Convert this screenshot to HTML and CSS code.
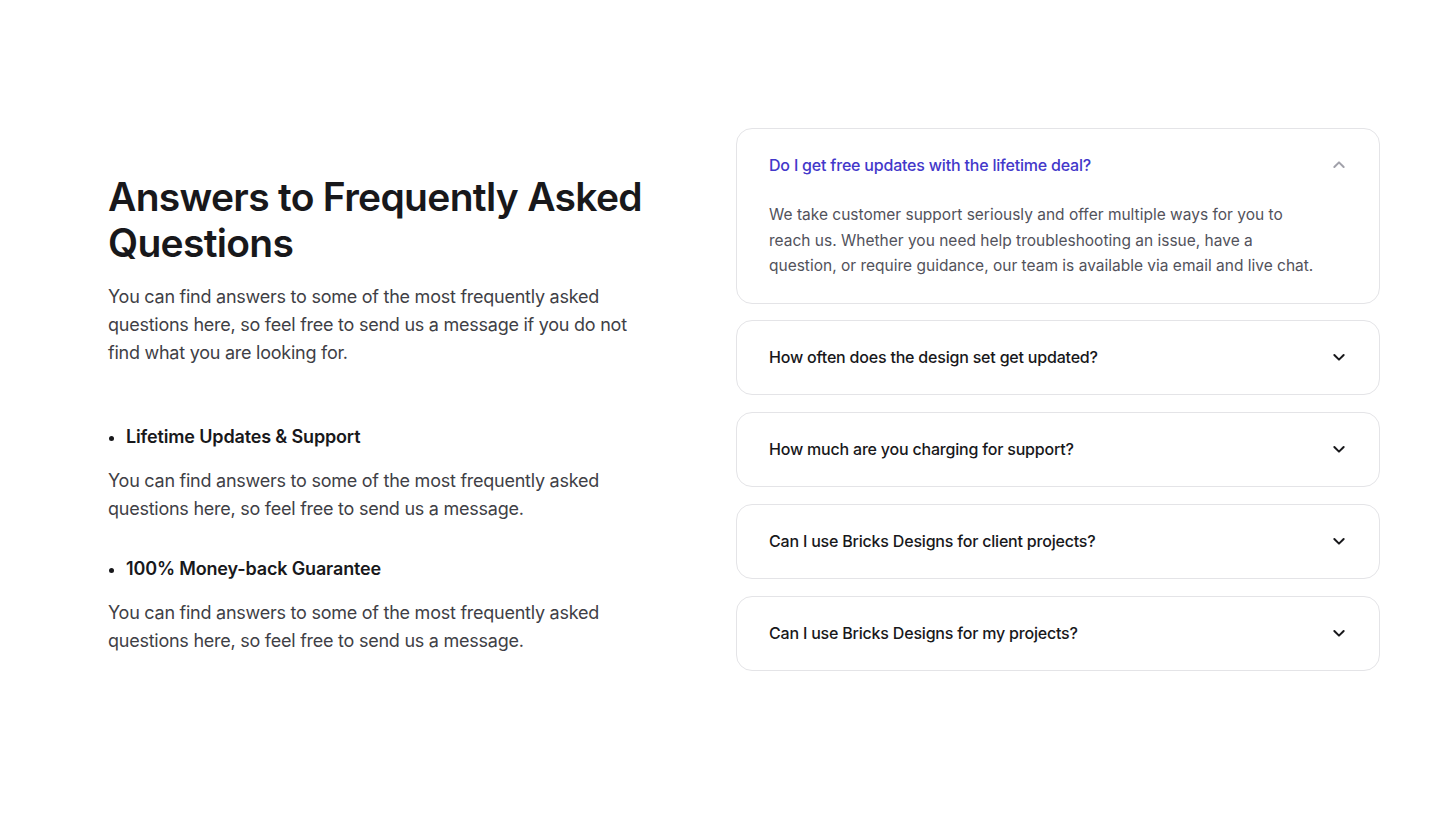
FILE: index.html
```html
<!DOCTYPE html>
<html lang="en">
<head>
  <meta charset="UTF-8">
  <meta name="viewport" content="width=device-width, initial-scale=1.0">
  <title>FAQ</title>
  <link rel="stylesheet" href="styles.css">
</head>
<body>

  <section class="faq">
    <div class="faq-intro">
      <h2>Answers to Frequently Asked Questions</h2>
      <p class="lead">You can find answers to some of the most frequently asked questions here, so feel free to send us a message if you do not find what you are looking for.</p>

      <ul class="perks">
        <li>
          <h4>Lifetime Updates &amp; Support</h4>
          <p>You can find answers to some of the most frequently asked questions here, so feel free to send us a message.</p>
        </li>
        <li>
          <h4>100% Money-back Guarantee</h4>
          <p>You can find answers to some of the most frequently asked questions here, so feel free to send us a message.</p>
        </li>
      </ul>
    </div>

    <div class="accordion">
      <div class="item open">
        <button class="question">
          <span>Do I get free updates with the lifetime deal?</span>
          <svg width="16" height="16" viewBox="0 0 24 24" fill="none" stroke="currentColor" stroke-width="3" stroke-linecap="round" stroke-linejoin="round"><path d="M5 15l7-7 7 7"/></svg>
        </button>
        <p class="answer">We take customer support seriously and offer multiple ways for you to reach us. Whether you need help troubleshooting an issue, have a question, or require guidance, our team is available via email and live chat.</p>
      </div>
      <div class="item">
        <button class="question">
          <span>How often does the design set get updated?</span>
          <svg width="16" height="16" viewBox="0 0 24 24" fill="none" stroke="currentColor" stroke-width="3" stroke-linecap="round" stroke-linejoin="round"><path d="M5 9l7 7 7-7"/></svg>
        </button>
      </div>
      <div class="item">
        <button class="question">
          <span>How much are you charging for support?</span>
          <svg width="16" height="16" viewBox="0 0 24 24" fill="none" stroke="currentColor" stroke-width="3" stroke-linecap="round" stroke-linejoin="round"><path d="M5 9l7 7 7-7"/></svg>
        </button>
      </div>
      <div class="item">
        <button class="question">
          <span>Can I use Bricks Designs for client projects?</span>
          <svg width="16" height="16" viewBox="0 0 24 24" fill="none" stroke="currentColor" stroke-width="3" stroke-linecap="round" stroke-linejoin="round"><path d="M5 9l7 7 7-7"/></svg>
        </button>
      </div>
      <div class="item">
        <button class="question">
          <span>Can I use Bricks Designs for my projects?</span>
          <svg width="16" height="16" viewBox="0 0 24 24" fill="none" stroke="currentColor" stroke-width="3" stroke-linecap="round" stroke-linejoin="round"><path d="M5 9l7 7 7-7"/></svg>
        </button>
      </div>
    </div>
  </section>

</body>
</html>
```

FILE: styles.css
```css
body {
  margin: 0;
  background-color: #ffffff;
  font-family: Inter, "Liberation Sans", sans-serif;
  color: #18181b;
}

.faq {
  display: flex;
  align-items: flex-start;
  gap: 86px;
  padding: 128px 60px 160px 108px;
}

.faq-intro {
  width: 542px;
  flex-shrink: 0;
  margin-top: 46px;
}

.faq-intro h2 {
  margin: 0 0 17px 0;
  font-size: 39px;
  line-height: 46px;
  font-weight: 600;
  letter-spacing: -0.7px;
  color: #18181b;
}

.lead {
  margin: 0;
  font-size: 18px;
  line-height: 28px;
  letter-spacing: -0.25px;
  color: #3f3f46;
}

.perks {
  margin: 56px 0 0 0;
  padding: 0 0 0 18px;
}

.perks li {
  margin-bottom: 32px;
}

.perks li:last-child {
  margin-bottom: 0;
}

.perks h4 {
  margin: 0 0 16px 0;
  font-size: 18px;
  line-height: 28px;
  font-weight: 600;
  letter-spacing: -0.15px;
}

.perks p {
  margin: 0 0 0 -18px;
  font-size: 18px;
  line-height: 28px;
  letter-spacing: -0.25px;
  color: #3f3f46;
}

.accordion {
  flex: 1;
  display: flex;
  flex-direction: column;
  gap: 16.7px;
}

.item {
  border: 1px solid #e4e4e7;
  border-radius: 16px;
  background-color: #ffffff;
}

.question {
  width: 100%;
  display: flex;
  align-items: center;
  justify-content: space-between;
  padding: 24px 32px 25px 32px;
  border: none;
  background: none;
  font-family: inherit;
  font-size: 16px;
  line-height: 24px;
  font-weight: 500;
  letter-spacing: -0.2px;
  color: #18181b;
  text-align: left;
  cursor: pointer;
}

.question svg {
  color: #18181b;
}

.open .question {
  color: #4338ca;
}

.open .question svg {
  color: #a1a1aa;
}

.answer {
  margin: 0;
  padding: 0 60px 24px 32px;
  font-size: 15.5px;
  line-height: 25.6px;
  color: #52525b;
}
```
